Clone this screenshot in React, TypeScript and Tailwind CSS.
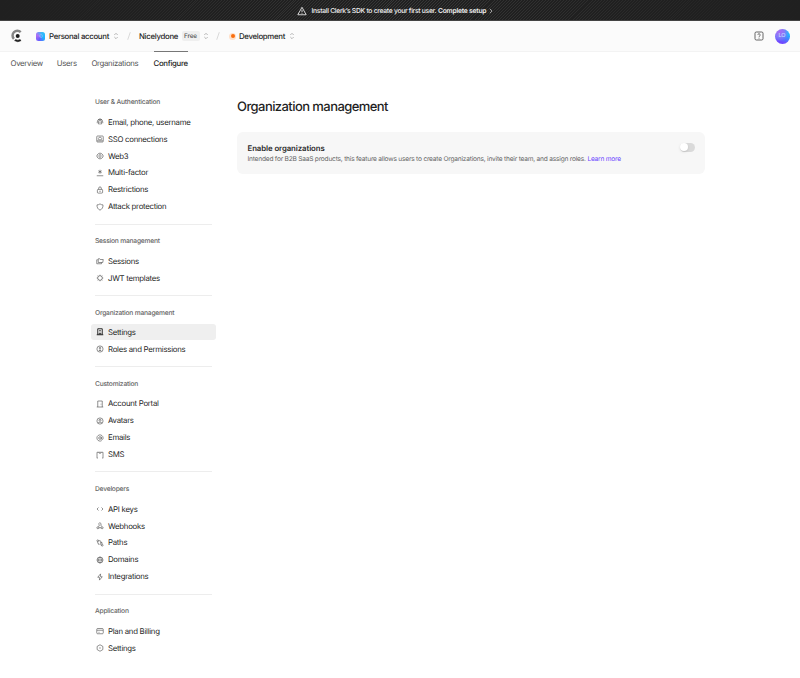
import React from 'react';

type IconName =
  | 'fingerprint' | 'sso' | 'web3' | 'asterisk' | 'lock' | 'shield' | 'sessions' | 'jwt' | 'building' | 'roles'
  | 'door' | 'avatar' | 'at' | 'sms' | 'code' | 'webhook' | 'paths' | 'globe' | 'bolt' | 'card' | 'hexagon';

interface NavItem {
  label: string;
  icon: IconName;
  active?: boolean;
}

interface NavSection {
  title: string;
  items: NavItem[];
}

const sections: NavSection[] = [
  {
    title: 'User & Authentication',
    items: [
      { label: 'Email, phone, username', icon: 'fingerprint' },
      { label: 'SSO connections', icon: 'sso' },
      { label: 'Web3', icon: 'web3' },
      { label: 'Multi-factor', icon: 'asterisk' },
      { label: 'Restrictions', icon: 'lock' },
      { label: 'Attack protection', icon: 'shield' },
    ],
  },
  {
    title: 'Session management',
    items: [
      { label: 'Sessions', icon: 'sessions' },
      { label: 'JWT templates', icon: 'jwt' },
    ],
  },
  {
    title: 'Organization management',
    items: [
      { label: 'Settings', icon: 'building', active: true },
      { label: 'Roles and Permissions', icon: 'roles' },
    ],
  },
  {
    title: 'Customization',
    items: [
      { label: 'Account Portal', icon: 'door' },
      { label: 'Avatars', icon: 'avatar' },
      { label: 'Emails', icon: 'at' },
      { label: 'SMS', icon: 'sms' },
    ],
  },
  {
    title: 'Developers',
    items: [
      { label: 'API keys', icon: 'code' },
      { label: 'Webhooks', icon: 'webhook' },
      { label: 'Paths', icon: 'paths' },
      { label: 'Domains', icon: 'globe' },
      { label: 'Integrations', icon: 'bolt' },
    ],
  },
  {
    title: 'Application',
    items: [
      { label: 'Plan and Billing', icon: 'card' },
      { label: 'Settings', icon: 'hexagon' },
    ],
  },
];

const iconShapes: Record<IconName, React.ReactNode> = {
  fingerprint: <path d="M2.500 10.500V8a5.500 5.500 0 0 1 11 0v2.500M5 12.500V8a3 3 0 0 1 6 0v4.500M8 8v5.500M4 3.500a6 6 0 0 1 8 0" />,
  sso: (
    <>
      <rect x="1.5" y="2" width="13" height="12" rx="1.5" />
      <path d="M2 11.700h12M5.500 9.500a2 2 0 0 1 0-3.500 2.700 2.700 0 0 1 5 0 2 2 0 0 1 0 3.500z" />
    </>
  ),
  web3: <path d="M6 2.500 2 6v4l4 3.500M10 2.500 14 6v4l-4 3.500M8 4.500 5.500 8 8 11.500 10.500 8zM6 2.500h4M6 13.500h4" />,
  asterisk: <path d="M8 1.500v8M4.600 3.500l6.800 4M11.400 3.500l-6.800 4M1.500 13.500h13" />,
  lock: (
    <>
      <rect x="2.800" y="6.800" width="10.400" height="7.400" rx="1.500" />
      <path d="M5.300 7V4.500a2.700 2.700 0 0 1 5.400 0V7M6.500 10.500h3" />
    </>
  ),
  shield: <path d="M8 1.800c2 1.400 3.900 1.900 6 2C14.300 9 12 12.500 8 14.300 4 12.500 1.700 9 2 3.800c2.100-.1 4-.6 6-2z" />,
  sessions: <path d="M4.500 11V3.500h3l1 1.500h6L13.500 11zM3.500 5.500h-2v8H11V11" />,
  jwt: (
    <>
      <circle cx="8" cy="8" r="4.700" />
      <path d="M8 1.500v2M8 12.500v2M1.500 8h2M12.500 8h2M3.400 3.400l1.400 1.400M11.200 11.200l1.400 1.400M3.400 12.600l1.400-1.400M11.200 4.800l1.400-1.400" />
    </>
  ),
  building: <path d="M3.500 13.500v-12h9v12M1.500 13.500h13M6.300 13.500v-3h3.400v3M6.300 5.500h3.400" />,
  roles: (
    <>
      <circle cx="8" cy="8" r="6.200" />
      <circle cx="8" cy="6" r="1.600" />
      <path d="M8 8.500v3M5.500 11h5" />
    </>
  ),
  door: <path d="M3.500 14v-12h9v12M1.500 14h13M10 7.500v1.500" />,
  avatar: (
    <>
      <circle cx="8" cy="8" r="6.200" />
      <circle cx="8" cy="6.500" r="2" />
      <path d="M4 12c1-2.200 7-2.200 8 0" />
    </>
  ),
  at: (
    <>
      <circle cx="8" cy="8" r="2.600" />
      <path d="M10.600 5.500V9a1.700 1.700 0 0 0 3.600 0V8A6.200 6.200 0 1 0 11.500 13.100" />
    </>
  ),
  sms: <path d="M2 14.500v-12h12v12M5.500 2.500 8 5.500l2.500-3M2 14h1.500M12.500 14H14" />,
  code: <path d="M5 5 2 8l3 3M11 5l3 3-3 3" />,
  webhook: (
    <>
      <circle cx="3.800" cy="11.500" r="2" />
      <circle cx="12.200" cy="11.500" r="2" />
      <path d="M6 11.500h4M5.300 5A2.500 2.500 0 1 1 9.500 6l1.700 3M7.500 5 5 9.500" />
    </>
  ),
  paths: (
    <>
      <circle cx="3.500" cy="3.500" r="1.700" />
      <circle cx="12.500" cy="12.500" r="1.700" />
      <path d="M5.200 3.500H8A1.500 1.500 0 0 1 9.500 5v6A1.500 1.500 0 0 0 11 12.500M3.500 5.200V8A1.500 1.500 0 0 0 5 9.500h1V12M9.500 7H12v3" />
    </>
  ),
  globe: (
    <>
      <circle cx="8" cy="8" r="6" />
      <ellipse cx="8" cy="8" rx="2.700" ry="6" />
      <path d="M2 8h12" />
    </>
  ),
  bolt: <path d="M9 1.800 3.500 8.500h3.300L7 14.200l5.500-6.700H9.200z" />,
  card: (
    <>
      <rect x="1.500" y="3" width="13" height="10.500" rx="1.800" />
      <path d="M2 6.500h12M5 10.500h2" />
    </>
  ),
  hexagon: (
    <>
      <path d="M8 1.500 13.700 4.800v6.400L8 14.500l-5.700-3.300V4.800z" />
      <circle cx="8" cy="8" r=".6" />
    </>
  ),
};

const NavIcon: React.FC<{ name: IconName; active?: boolean }> = ({ name, active }) => (
  <svg
    viewBox="0 0 16 16"
    className={active ? 'size-2 shrink-0 text-[#222]' : 'size-2 shrink-0 text-[#505050]'}
    fill="none"
    stroke="currentColor"
    strokeWidth={active ? 1.9 : 1.25}
    strokeLinejoin="round"
  >
    {iconShapes[name]}
  </svg>
);

const Selector: React.FC = () => (
  <svg viewBox="0 0 6 8" className="h-2 w-1.5 shrink-0" fill="none" stroke="#a5a5a5" strokeWidth=".8">
    <path d="M1.300 3 3 1.300 4.700 3M1.300 5 3 6.700 4.700 5" />
  </svg>
);

const Slash: React.FC = () => (
  <svg viewBox="0 0 4 8" className="h-2 w-1 shrink-0" fill="none" stroke="#d0d0d0" strokeWidth=".8">
    <path d="M.7 7.800 3.300.2" />
  </svg>
);

const Logo: React.FC = () => (
  <svg viewBox="0 0 12 14" className="h-3.5 w-3 shrink-0">
    <path d="M9.700 3.200A4.700 4.700 0 1 0 2.900 9.800" fill="none" stroke="#858585" strokeWidth="2.500" />
    <circle cx="6.700" cy="6.900" r="2" fill="#1d1d1d" />
    <path d="M3.600 11.600l1.100-1a4.500 4.500 0 0 0 4.300 0l1.100 1a5.600 5.600 0 0 1-6.500 0z" fill="#1d1d1d" stroke="#1d1d1d" strokeWidth=".6" />
  </svg>
);

const Banner: React.FC = () => (
  <div className="flex h-[21px] items-center border-b border-[#444] bg-[#202020] bg-[linear-gradient(90deg,#202020_0%,transparent_50%,#202020_100%),repeating-linear-gradient(135deg,#202020_0px,#202020_1.400px,#383838_1.400px,#383838_2.100px)] pl-[297px] pt-px text-[6.750px] text-[#f0f0f0]">
    <svg viewBox="0 0 16 16" className="size-2.5 shrink-0" fill="none" stroke="#ddd" strokeWidth="1.500" strokeLinejoin="round">
      <path d="M8 2 14.700 14H1.300zM8 6v4M8 11.200v1.200" />
    </svg>
    <span className="ml-[4.500px] w-[124.500px] whitespace-nowrap pt-px font-medium tracking-[-0.280px]">Install Clerk’s SDK to create your first user.</span>
    <span className="ml-[2px] w-[49px] whitespace-nowrap pt-px font-semibold tracking-[-0.230px]">Complete setup</span>
    <svg viewBox="0 0 4 6" className="ml-[2px] h-1.5 w-1" fill="none" stroke="#aaa" strokeWidth=".9">
      <path d="M.8.800 3 3 .8 5.200" />
    </svg>
  </div>
);

const Header: React.FC = () => (
  <header className="flex h-[30px] items-center bg-[#fbfbfb] pl-[11px] pr-[10.500px] text-[7.800px] font-medium tracking-[-0.300px] text-[#1f1f1f]">
    <Logo />
    <span className="ml-[13px] flex size-[9px] items-center justify-center rounded-[2.500px] bg-[conic-gradient(from_200deg,#6c5cff,#b070f5,#38bdf8,#19b5ff,#6c5cff)]">
      <span className="size-1 rounded-full border border-[#9fb0ff]/60" />
    </span>
    <span className="ml-[4px] w-[60px] whitespace-nowrap pt-px">Personal account</span>
    <span className="ml-[4px] flex"><Selector /></span>
    <span className="ml-[8px] flex"><Slash /></span>
    <span className="ml-[8px] w-[39px] whitespace-nowrap pt-px">Nicelydone</span>
    <span className="ml-[3.500px] flex h-[10px] w-[18px] items-center justify-center rounded-[2px] bg-[#efefef] pt-px text-[6.300px] tracking-[-0.100px] text-[#555]">Free</span>
    <span className="ml-[3px] flex"><Selector /></span>
    <span className="ml-[7px] flex"><Slash /></span>
    <span className="ml-[9.500px] flex size-[7px] items-center justify-center rounded-full bg-[#ffe0c8]">
      <span className="size-1 rounded-full bg-[#f96d0d]" />
    </span>
    <span className="ml-[3px] w-[46px] whitespace-nowrap pt-px">Development</span>
    <span className="ml-[4px] flex"><Selector /></span>
    <svg viewBox="0 0 10 10" className="ml-auto size-2.5" fill="none" stroke="#555" strokeWidth=".9">
      <rect x="1" y="1" width="8" height="8" rx="1.300" />
      <path d="M3.800 4a1.200 1.200 0 1 1 1.800 1.050q-.6.350-.6.850M5 6.700v.9" />
    </svg>
    <span className="ml-[11px] flex size-[15px] items-center justify-center rounded-full bg-[radial-gradient(circle_at_30%_20%,#a76bf3_0%,#8a78f8_30%,transparent_60%),linear-gradient(20deg,#7048ff_20%,#20b6ff_70%)] text-[5.500px] tracking-normal text-[#c3dcff]">
      LO
    </span>
  </header>
);

const Tabs: React.FC = () => (
  <nav className="flex h-[24px] gap-[14.200px] border-t border-[#f3f3f3] pl-[10.500px] text-[7.800px] tracking-[-0.300px] text-[#555]">
    <span className="flex w-[32px] items-center whitespace-nowrap">Overview</span>
    <span className="flex w-[20.500px] items-center whitespace-nowrap">Users</span>
    <span className="flex w-[48px] items-center whitespace-nowrap">Organizations</span>
    <span className="-mt-px flex w-[34px] items-center whitespace-nowrap border-t border-[#777] font-medium tracking-[-0.320px] text-[#1f1f1f]">Configure</span>
  </nav>
);

const Sidebar: React.FC = () => (
  <aside className="w-[125px] shrink-0">
    {sections.map((section, index) => (
      <section key={section.title}>
        {index > 0 && <hr className="mb-[8.500px] ml-[4px] mr-[4px] mt-[8.900px] border-[#ededed]" />}
        <h2 className="flex h-4 items-center pl-[4px] pt-[0.600px] text-[6.700px] font-medium tracking-[-0.220px] text-[#666]">{section.title}</h2>
        <ul className="mt-[4px] flex flex-col gap-[0.950px]">
          {section.items.map((item) => (
            <li
              key={item.label}
              className={
                item.active
                  ? 'flex h-4 items-center gap-[4.500px] whitespace-nowrap rounded-[3px] bg-[#efefef] pl-[4.500px] text-[7.800px] tracking-[-0.270px] text-[#1f1f1f]'
                  : 'flex h-4 items-center gap-[4.500px] whitespace-nowrap pl-[4.500px] text-[7.800px] tracking-[-0.270px] text-[#1f1f1f]'
              }
            >
              <NavIcon name={item.icon} active={item.active} />
              <span className="pt-px">{item.label}</span>
            </li>
          ))}
        </ul>
      </section>
    ))}
  </aside>
);

export default function App() {
  return (
    <div className="h-[678px] w-[800px] overflow-hidden bg-white font-['Inter','Liberation_Sans',sans-serif] [text-rendering:geometricPrecision]">
      <Banner />
      <Header />
      <Tabs />
      <div className="flex pl-[91px] pt-[19px]">
        <Sidebar />
        <main className="ml-[21px] w-[468px] pt-[4px]">
          <h1 className="text-[13px] font-medium leading-[18px] tracking-[-0.570px] text-[#1f1f1f]">Organization management</h1>
          <div className="mt-[15.500px] flex h-[42px] justify-between rounded-[6px] bg-[#f7f7f7] pl-[10.500px] pr-[10.500px] pt-[11px]">
            <div>
              <div className="text-[7.800px] font-semibold leading-[11px] tracking-[-0.080px] text-[#2a2a2a]">Enable organizations</div>
              <p className="whitespace-nowrap text-[6.600px] leading-[11px] tracking-[-0.212px] text-[#666]">
                Intended for B2B SaaS products, this feature allows users to create Organizations, invite their team, and assign roles.{' '}
                <a className="text-[#6c47ff]">Learn more</a>
              </p>
            </div>
            <span className="flex h-[9px] w-[15px] items-center rounded-full bg-[#dadada] p-[0.500px]">
              <span className="size-2 rounded-full bg-white shadow-sm" />
            </span>
          </div>
        </main>
      </div>
    </div>
  );
}
